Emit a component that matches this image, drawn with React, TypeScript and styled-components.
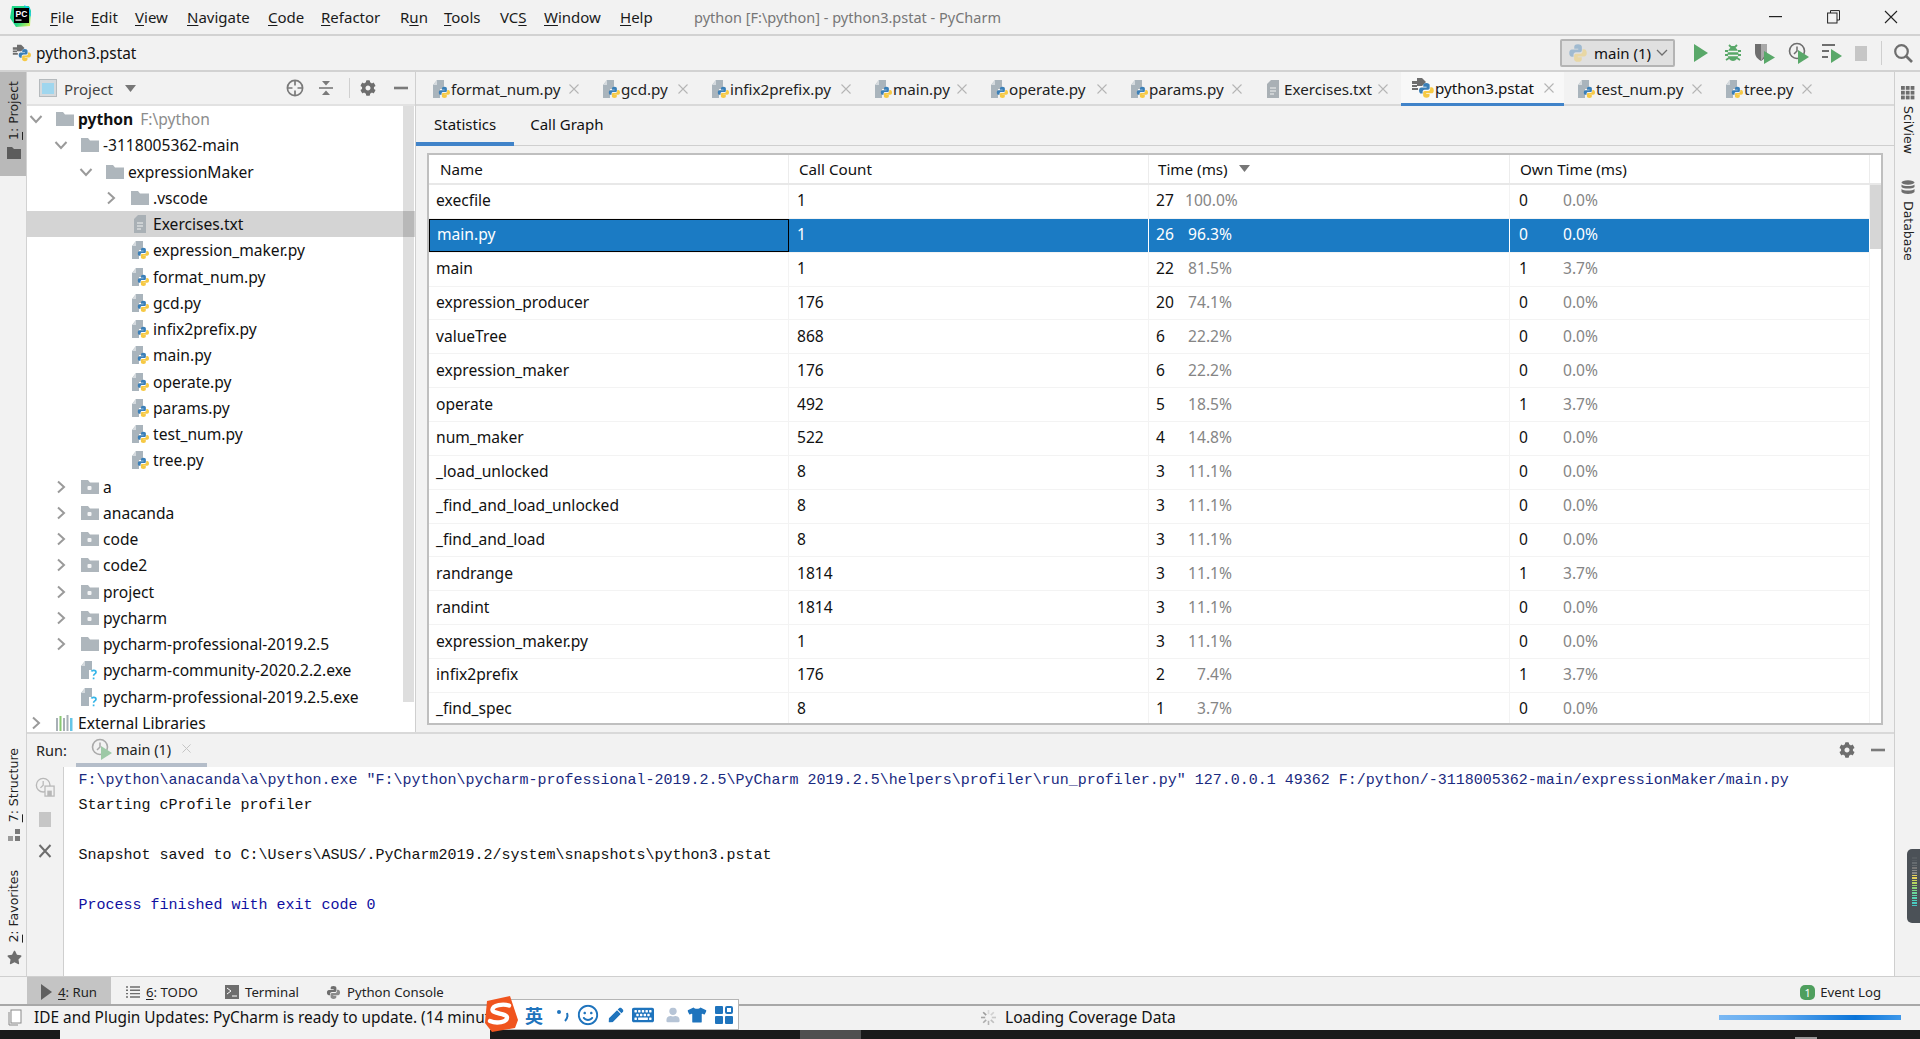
import React from "react";
import styled, { createGlobalStyle } from "styled-components";
import { FaCog, FaStar, FaTshirt, FaKeyboard, FaRegSmile, FaPen, FaUser } from "react-icons/fa";

const Global = createGlobalStyle`
  html, body { margin: 0; padding: 0; background: #f2f2f2; }
  * { box-sizing: border-box; }
  u { text-underline-offset: 2px; text-decoration-thickness: 1px; }
`;

const UI = `"Noto Sans", "Open Sans", sans-serif`;

const Page = styled.div`
  position: relative; width: 1920px; height: 1039px; overflow: hidden;
  display: flex; flex-direction: column; background: #f2f2f2;
  font-family: ${UI}; font-size: 15px; color: #111;
`;
const TitleBar = styled.div`
  height: 36px; flex: none; display: flex; align-items: center;
  border-bottom: 2px solid #d2d2d2; padding-left: 10px;
`;
const LogoBox = styled.div`width: 22px; height: 24px; flex: none; margin-top: -2px; display:flex; align-items:center;`;
const Menu = styled.div`display: flex; margin-left: 18px;`;
const MenuItem = styled.span<{ $w: number }>`width: ${p => p.$w}px; font-size: 15px; white-space: nowrap; color:#1a1a1a;`;
const WinTitle = styled.span`margin-left: 0; color: #777; font-size: 14.5px; white-space: nowrap;`;
const WinControls = styled.div`margin-left: auto; display: flex; align-items: center;`;
const WinBtn = styled.div`width: 58px; height: 34px; display: flex; align-items: center; justify-content: center;`;

const NavBar = styled.div`
  height: 36px; flex: none; display: flex; align-items: center; padding: 0 7px 0 12px;
  border-bottom: 2px solid #d2d2d2;
`;
const NavCrumb = styled.span`margin-left: 4px; font-size: 15.4px;`;
const NavTools = styled.div`margin-left: auto; display: flex; align-items: center; gap: 11.5px;`;
const RunConfig = styled.div`
  width: 115px; height: 28px; margin-right: 4.5px; display: flex; align-items: center; padding-left: 6px;
  background: #e0e0e0; border: 2px solid #b4b4b4; border-radius: 2px; font-size: 15px;
`;
const RunConfigName = styled.span`margin-left: 6px; white-space: nowrap;`;
const RunConfigCaret = styled.span`margin-left: auto; margin-right: 5px; display: flex;`;
const ToolSep = styled.div`width: 1px; height: 24px; background: #cfcfcf; margin: 0 0 0 2.5px;`;

const Middle = styled.div`flex: 1; min-height: 0; display: flex;`;
const LeftStripe = styled.div`
  width: 27px; flex: none; display: flex; flex-direction: column; align-items: stretch;
  border-right: 1px solid #d2d2d2;
`;
const StripeTab = styled.div<{ $active?: boolean; $mt?: string }>`
  display: flex; flex-direction: column; align-items: center; gap: 7px;
  padding: 7px 0 7px 2px; margin-top: ${p => p.$mt || "0"};
  background: ${p => (p.$active ? "#b9b9b9" : "transparent")};
`;
const StripeTabTop = styled(StripeTab)`padding-top: 9px; height: 104px;`;
const VerticalLabel = styled.span`
  writing-mode: vertical-rl; transform: rotate(180deg); white-space: nowrap;
  font-family: "DejaVu Sans", sans-serif; font-size: 12.5px; line-height: 14px; color: #222;
`;
const RightLabel = styled.span`
  writing-mode: vertical-rl; white-space: nowrap;
  font-family: "DejaVu Sans", sans-serif; font-size: 12.5px; line-height: 14px; color: #222;
`;
const RightStripe = styled.div`
  width: 26px; flex: none; display: flex; flex-direction: column; align-items: center;
  border-left: 1px solid #cfcfcf; padding-top: 14px;
`;
const RightTab = styled.div<{ $mb?: number }>`
  display: flex; flex-direction: column; align-items: center; gap: 6px; margin-bottom: ${p => p.$mb || 0}px;
`;
const Center = styled.div`flex: 1; min-width: 0; display: flex; flex-direction: column;`;
const TopSplit = styled.div`height: 662px; flex: none; display: flex; border-bottom: 2px solid #d9d9d9;`;

const ProjectPanel = styled.div`width: 389px; flex: none; display: flex; flex-direction: column; background: #fff; border-right: 1px solid #cfcfcf;`;
const PanelHead = styled.div`
  height: 34px; flex: none; display: flex; align-items: center; background: #f2f2f2;
  padding-left: 12px; border-bottom: 2px solid #e2e2e2;
`;
const PanelTitle = styled.span`margin-left: 7px; margin-top: 1px; color: #444; font-size: 15px;`;
const Caret = styled.span`margin-left: 12px; display: flex;`;
const PanelTools = styled.div`margin-left: auto; display: flex; align-items: center; gap: 14px; padding-right: 7px;`;
const PanelSep = styled.div`width: 1px; height: 20px; background: #d0d0d0; margin: 0 -4px 0 1px;`;
const MinusSlot = styled.span`display: flex; margin-left: 4px;`;
const TreeArea = styled.div`position: relative; flex: 1; min-height: 0;`;
const TreeThumb = styled.div`
  position: absolute; right: 1px; top: 0; width: 11px; height: 596px; background: rgba(0, 0, 0, 0.13);
`;
const TreeRow = styled.div<{ $depth: number; $sel?: boolean }>`
  height: 26.25px; display: flex; align-items: center; padding-left: ${p => 2 + p.$depth * 25}px;
  background: ${p => (p.$sel ? "#d4d4d4" : "transparent")}; white-space: nowrap; font-size: 15.6px; line-height: 20px;
`;
const Chev = styled.span`width: 14px; height: 14px; flex: none; display: flex; align-items: center; justify-content: center;`;
const TreeIcon = styled.span`width: 20px; height: 20px; flex: none; margin: 0 3px 0 12px; display: flex; align-items: center; justify-content: center;`;
const TreeRoot = styled.b`font-weight: 700; color:#111;`;
const TreeHint = styled.span`color: #8c8c8c; margin-left: 7px;`;

const Editor = styled.div`flex: 1; min-width: 0; display: flex; flex-direction: column;`;
const TabBar = styled.div`height: 34px; flex: none; display: flex; padding-left: 6px; border-bottom: 2px solid #d9d9d9;`;
const FileTab = styled.div<{ $w: number; $active?: boolean; $gap?: number }>`
  width: ${p => p.$w}px; height: ${p => (p.$active ? "34px" : "32px")}; flex: none; display: flex; align-items: center;
  padding: ${p => (p.$active ? "0 10px 0 10px" : "2px 13px 0 10px")}; white-space: nowrap; font-size: 15.2px; color: #222;
  margin-right: ${p => p.$gap || 0}px;
  ${p => (p.$active ? "background:#f8f8f8; border-bottom: 3px solid #4083c9; color:#111;" : "")}
`;
const TabIconGap = styled.span`display: flex; margin-right: 3px;`;
const TabClose = styled.span`margin-left: auto; display: flex;`;
const SubTabs = styled.div`height: 40px; flex: none; display: flex; border-bottom: 1px solid #cfcfcf;`;
const SubTab = styled.div<{ $active?: boolean }>`
  height: 40px; display: flex; align-items: center; font-size: 15px; color: #111;
  padding: 0 18px ${p => (p.$active ? 0 : 4)}px ${p => (p.$active ? 18 : 16)}px;
  ${p => (p.$active ? "border-bottom: 4px solid #4083c9;" : "")}
`;
const TableWrap = styled.div`
  flex: 1; min-height: 0; margin: 7px 11px 7px 11px; border: 2px solid #bfbfbf; background: #fff;
  display: flex; flex-direction: column; overflow: hidden;
`;
const HeadRow = styled.div`
  height: 30px; flex: none; display: grid; grid-template-columns: 360px 360px 361px 360px;
  border-bottom: 2px solid #e8e8e8;
`;
const HeadCell = styled.div<{ $pl: number }>`
  padding: 0 0 1px ${p => p.$pl}px; display: flex; align-items: center; gap: 11px; font-size: 15.2px; color: #111;
  border-right: 1px solid #ececec;
`;
const TableBody = styled.div`flex: 1; min-height: 0; display: flex;`;
const Rows = styled.div`width: 1441px; flex: none;`;
const TableScroll = styled.div`flex: 1; background: #fff;`;
const TableThumb = styled.div`height: 64px; background: #d6d6d6;`;
const Row = styled.div<{ $sel?: boolean }>`
  height: 33.87px; display: grid; grid-template-columns: 360px 360px 361px 360px;
  border-bottom: 1px solid #f3f3f3;
  background: ${p => (p.$sel ? "#1b7bc4" : "#fff")}; color: ${p => (p.$sel ? "#fff" : "#111")};
`;
const Cell = styled.div<{ $sel?: boolean; $focus?: boolean; $pl?: number }>`
  padding: 0 0 2px ${p => p.$pl ?? 7}px; display: flex; align-items: center; font-size: 15.6px; white-space: nowrap;
  border-right: 1px solid ${p => (p.$sel ? "#fff" : "#f3f3f3")};
  ${p => (p.$focus ? "border: 1px solid #000;" : "")}
`;
const Num = styled.span<{ $w: number }>`width: ${p => p.$w}px;`;
const Pct = styled.span<{ $sel?: boolean }>`
  width: 47px; text-align: right; color: ${p => (p.$sel ? "#fff" : "#858585")};
`;

const RunPanel = styled.div`flex: 1; min-height: 0; display: flex; flex-direction: column;`;
const RunHead = styled.div`height: 33px; flex: none; display: flex; align-items: stretch; padding-left: 9px;`;
const RunLabel = styled.span`align-self: center; font-size: 14.5px; color: #222; width: 40px; margin-top: -2px;`;
const RunTab = styled.div`
  width: 131px; display: flex; align-items: center; padding: 0 0 0 15px; border-bottom: 4px solid #b4bdc9;
  font-size: 14.5px; color: #222;
`;
const RunTabName = styled.span`margin-left: 3px; white-space: nowrap;`;
const RunTabClose = styled.span`margin-left: 11px; display: flex;`;
const RunTools = styled.div`margin-left: auto; display: flex; align-items: center; gap: 16px; padding: 0 9px 2px 0;`;
const ConsoleArea = styled.div`flex: 1; min-height: 0; display: flex;`;
const Gutter = styled.div`
  width: 37px; flex: none; border-right: 1px solid #cfcfcf; display: flex; flex-direction: column; align-items: center;
  padding-top: 10px; gap: 12px;
`;
const GutterBtn = styled.div`width: 20px; height: 20px; display: flex; align-items: center; justify-content: center;`;
const Console = styled.pre`
  flex: 1; margin: 0; background: #fff; padding: 1px 0 0 14.5px; overflow: hidden;
  font-family: "Liberation Mono", "DejaVu Sans Mono", monospace; font-size: 15px; line-height: 25px;
`;
const ConsoleLine = styled.div<{ $c: string }>`height: 25px; color: ${p => p.$c};`;

const BottomTabs = styled.div`
  height: 28px; flex: none; display: flex; align-items: stretch; border-top: 1px solid #cfcfcf; padding-left: 27px;
  font-size: 13.2px; color: #222;
`;
const BottomTab = styled.div<{ $w: number; $active?: boolean; $pl: number }>`
  width: ${p => p.$w}px; display: flex; align-items: center; gap: 6px; padding: 3px 0 0 ${p => p.$pl}px;
  white-space: nowrap; background: ${p => (p.$active ? "#c4c4c4" : "transparent")};
`;
const EventLog = styled.div`margin-left: auto; margin-right: 39px; padding-top: 3px; display: flex; align-items: center; gap: 5px;`;
const Badge = styled.span`
  width: 15px; height: 15px; border-radius: 5px; background: #4f9f5e; color: #fff; font-size: 11px; line-height: 15px; text-align: center;
`;
const StatusBar = styled.div`
  height: 26px; flex: none; display: flex; align-items: center; border-top: 2px solid #a8a8a8; padding: 0 0 2px 8px;
  font-size: 15.6px; color: #111;
`;
const StatusMsg = styled.div`width: 480px; margin-left: 12px; white-space: nowrap; flex: none; font-size: 15.4px;`;
const StatusLoading = styled.div`margin-left: 466px; display: flex; align-items: center; gap: 8px; white-space: nowrap;`;
const Progress = styled.div`
  flex: none; margin-left: auto; margin-right: 19px; width: 182px; height: 5px;
  background: linear-gradient(90deg, #7ab8f3 0%, #5ba6ee 35%, #0a74d8 75%, #3f98ea 100%);
`;
const Taskbar = styled.div`height: 9px; flex: none; display: flex; background: #1a1a1a;`;
const TaskLight = styled.div`width: 430px; margin-left: 60px; background: #f2f2f2;`;
const TaskTile = styled.div`width: 61px; margin-left: 310px; background: #505050;`;
const TaskGlyph = styled.div`width: 22px; height: 2px; margin: 7px 0 0 934px; background: #cfcfcf; opacity: .7;`;

const Ime = styled.div`
  position: absolute; left: 500px; top: 999px; width: 239px; height: 31px; background: #fff;
  border: 1px solid #b5b5b5; display: flex; align-items: center; color: #1f74bd;
`;
const ImeLogo = styled.div`position: absolute; left: -18px; top: -4px; width: 35px; height: 36px;`;
const ImeSlot = styled.span<{ $x: number }>`
  position: absolute; left: ${p => p.$x}px; top: 50%; transform: translate(-50%, -50%); display: flex;
`;
const ImeChar = styled.span`font-family: "Noto Sans CJK SC", sans-serif; font-weight: 700; font-size: 18px; line-height: 20px;`;
const Meter = styled.div`
  position: absolute; right: 0; top: 849px; width: 13px; height: 74px; background: #4b5157;
  border-radius: 5px 0 0 5px; padding: 8px 3px 8px 5px; display: flex; flex-direction: column; gap: 1px;
`;
const MeterBar = styled.div<{ $c: string }>`height: 1.5px; width: 5px; background: ${p => p.$c};`;

/* ---------- icons ---------- */
const BLUE = "M8 1C5.6 1 5 2 5 3.1V4.6h3.2v.6H3.1C1.9 5.2 1 6.2 1 8s.9 3 2.1 3h1.3V9.3c0-1 .9-1.9 1.9-1.9h3.2c.9 0 1.6-.7 1.6-1.6V3.1C11.1 2 10 1 8 1z";
const PyLogo = ({ s = 14, o = 1 }: { s?: number; o?: number }) => (
  <svg width={s} height={s} viewBox="0 0 16 16" opacity={o}>
    <path d={BLUE} fill="#3a7fb8" />
    <path d={BLUE} fill="#f6c945" transform="rotate(180 8 8)" />
  </svg>
);
const PyFile = () => (
  <svg width="19" height="20" viewBox="0 0 19 20">
    <path d="M1 6l4-5h7v9H8v9H1z" fill="#a9b4bc" />
    <path d="M5 1v5H1z" fill="#d5dade" />
    <g transform="translate(6 7) scale(.8)">
      <path d={BLUE} fill="#3a7fb8" />
      <path d={BLUE} fill="#f6c945" transform="rotate(180 8 8)" />
    </g>
  </svg>
);
const TxtFile = () => (
  <svg width="16" height="20" viewBox="0 0 16 20">
    <path d="M2 5l4-4h8v18H2z" fill="#a9b0b5" />
    <path d="M5 9h6M5 12h6M5 15h4" stroke="#f2f2f2" strokeWidth="1.2" />
  </svg>
);
const QFile = () => (
  <svg width="20" height="20" viewBox="0 0 20 20">
    <path d="M1 6l4-5h7v9H9v9H1z" fill="#a9b4bc" />
    <path d="M5 1v5H1z" fill="#d5dade" />
    <path d="M11.5 11.5c.3-1.5 4.5-1.8 4.5.7 0 1.8-2.4 1.6-2.4 3.6M13.6 17.4v1.8" stroke="#35b5e8" strokeWidth="1.7" fill="none" />
  </svg>
);
const Pstat = ({ s = 24 }: { s?: number }) => (
  <svg width={s} height={s} viewBox="0 0 24 24">
    <path d="M1 5h5V2h5l4 4-4 4H6V8H1zM1 9h5v2H1zM1 12h6v2H1z" fill="#6e6e6e" />
    <g transform="translate(7 6) scale(1.05)">
      <path d={BLUE} fill="#3a7fb8" />
      <path d={BLUE} fill="#f6c945" transform="rotate(180 8 8)" />
    </g>
  </svg>
);
const Folder = ({ dot }: { dot?: boolean }) => (
  <svg width="18" height="16" viewBox="0 0 18 16">
    <path d="M0 1h7l2 2.5h9V15H0z" fill="#aeb6bc" />
    {dot && <rect x="6.5" y="7" width="4" height="4" rx="1" fill="#f4f5f6" />}
  </svg>
);
const ChevR = () => (<svg width="10" height="14" viewBox="0 0 10 14"><path d="M2 1.5L8 7l-6 5.5" fill="none" stroke="#9a9a9a" strokeWidth="2" /></svg>);
const ChevD = () => (<svg width="14" height="10" viewBox="0 0 14 10"><path d="M1.5 2L7 8l5.5-6" fill="none" stroke="#9a9a9a" strokeWidth="2" /></svg>);
const Libs = () => (
  <svg width="18" height="16" viewBox="0 0 18 16">
    <rect x="0" y="3" width="2" height="13" fill="#a8b0b6" /><rect x="3.5" y="1" width="2" height="15" fill="#62b543" opacity=".75" />
    <rect x="7" y="3" width="2" height="13" fill="#a8b0b6" /><rect x="10.5" y="0" width="2" height="16" fill="#a8b0b6" />
    <rect x="14" y="3" width="2.5" height="13" fill="#40b6e0" opacity=".8" />
  </svg>
);
const CloseX = ({ c = "#b5b5b5", s = 10 }: { c?: string; s?: number }) => (
  <svg width={s} height={s} viewBox="0 0 10 10"><path d="M.5.5l9 9M9.5.5l-9 9" stroke={c} strokeWidth="1.1" /></svg>
);
const Play = ({ x = 0, y = 0, w = 9, h = 11 }: { x?: number; y?: number; w?: number; h?: number }) => (
  <path d={`M${x} ${y}l${w} ${h / 2}-${w} ${h / 2}z`} fill="#59a869" />
);
const PlayIcon = () => (<svg width="20" height="20" viewBox="0 0 20 20"><path d="M3 1l14 9-14 9z" fill="#59a869" /></svg>);
const Bug = () => (
  <svg width="20" height="20" viewBox="0 0 20 20">
    <path d="M6 2l2 2h4l2-2M2 8h3M15 8h3M2 12h3M15 12h3M3 17l3-2M17 17l-3-2" stroke="#59a869" strokeWidth="1.8" fill="none" />
    <ellipse cx="10" cy="11" rx="5.5" ry="7" fill="#59a869" />
    <path d="M5 8.5h10M5 12.5h10" stroke="#f2f2f2" strokeWidth="1.3" />
  </svg>
);
const Shield = () => (
  <svg width="22" height="22" viewBox="0 0 22 22">
    <path d="M1 2h12v8c0 5-3 7-6 9-3-2-6-4-6-9z" fill="#6e6e6e" />
    <path d="M7 2h6v8l-6 9z" fill="#a8a8a8" />
    <Play x={10} y={9} w={11} h={13} />
  </svg>
);
const Clock = ({ o = 1 }: { o?: number }) => (
  <svg width="22" height="22" viewBox="0 0 22 22" opacity={o}>
    <circle cx="9" cy="9" r="7.5" fill="none" stroke="#6e6e6e" strokeWidth="1.6" />
    <path d="M9 4.5V9l-3 3" fill="none" stroke="#6e6e6e" strokeWidth="1.5" />
    <Play x={10} y={8} w={11} h={14} />
  </svg>
);
const ListRun = () => (
  <svg width="22" height="22" viewBox="0 0 22 22">
    <path d="M1 3h13M1 9h7M1 15h6" stroke="#6e6e6e" strokeWidth="2.2" />
    <Play x={10} y={7} w={11} h={14} />
  </svg>
);
const Stop = ({ s = 15 }: { s?: number }) => (<svg width={s} height={s + 3} viewBox={`0 0 ${s} ${s + 3}`}><rect width={s} height={s + 3} fill="#c6c6c6" /></svg>);
const Search = () => (
  <svg width="20" height="20" viewBox="0 0 20 20"><circle cx="8.5" cy="8.5" r="6.3" fill="none" stroke="#6e6e6e" strokeWidth="2.2" /><path d="M13 13l6 6" stroke="#6e6e6e" strokeWidth="2.6" /></svg>
);
const PcLogo = () => (
  <svg width="22" height="24" viewBox="0 0 22 24">
    <defs>
      <linearGradient id="pc" x1="0" y1="0" x2="1" y2="1">
        <stop offset="0" stopColor="#21d789" /><stop offset=".6" stopColor="#21d789" /><stop offset="1" stopColor="#fcf84a" />
      </linearGradient>
    </defs>
    <path d="M2 2h17l2 5-1 15-14 1-6-9z" fill="url(#pc)" />
    <path d="M14 1l6 3 1 9z" fill="#07c3f2" />
    <rect x="4" y="4" width="15" height="15" fill="#000" />
    <text x="5.5" y="12.5" fontSize="8.5" fontWeight="700" fill="#fff" fontFamily="Liberation Sans, sans-serif">PC</text>
    <rect x="5.5" y="15.5" width="6" height="1.2" fill="#fff" />
  </svg>
);
const Target = () => (
  <svg width="18" height="18" viewBox="0 0 18 18"><circle cx="9" cy="9" r="7.6" fill="none" stroke="#7a7a7a" strokeWidth="1.7" /><path d="M9 1.5v5M9 11.5v5M1.5 9h5M11.5 9h5" stroke="#7a7a7a" strokeWidth="1.7" /></svg>
);
const CollapseAll = () => (
  <svg width="16" height="16" viewBox="0 0 16 16"><path d="M1 8h14" stroke="#7a7a7a" strokeWidth="1.6" /><path d="M4 1h8L8 5.5zM4 15h8l-4-4.5z" fill="#7a7a7a" /></svg>
);
const Minus = () => (<svg width="14" height="4" viewBox="0 0 14 4"><rect width="14" height="2.6" y=".7" fill="#7a7a7a" /></svg>);
const PanelGlyph = () => (
  <svg width="18" height="18" viewBox="0 0 18 18"><rect x=".5" y=".5" width="17" height="17" fill="#d5d9dc" stroke="#b5babd" /><rect x="3" y="4" width="12" height="11" fill="#9fd6ee" /></svg>
);
const DownTri = ({ c = "#777" }: { c?: string }) => (<svg width="11" height="7" viewBox="0 0 11 7"><path d="M0 0h11L5.5 7z" fill={c} /></svg>);
const StripeFolder = () => (<svg width="14" height="12" viewBox="0 0 14 12"><path d="M0 0h5l2 2h7v10H0z" fill="#5c5c5c" /></svg>);
const StructureGlyph = () => (<svg width="13" height="13" viewBox="0 0 13 13"><rect x="7" y="0" width="5" height="5" fill="#7a7a7a" /><rect x="7" y="7" width="5" height="5" fill="#7a7a7a" /><rect x="0" y="7" width="5" height="5" fill="#9a9a9a" /></svg>);
const SciGlyph = () => (
  <svg width="14" height="14" viewBox="0 0 14 14">{[0, 4.8, 9.6].flatMap(y => [0, 4.8, 9.6].map(x => <rect key={`${x}-${y}`} x={x} y={y} width="3.8" height="3.8" fill="#6e6e6e" />))}</svg>
);
const DbGlyph = () => (
  <svg width="14" height="15" viewBox="0 0 14 15"><ellipse cx="7" cy="2.5" rx="6.5" ry="2.2" fill="#6e6e6e" /><path d="M.5 4.5c2 2 11 2 13 0v2.5c-2 2-11 2-13 0zM.5 9c2 2 11 2 13 0v3c-2 2.5-11 2.5-13 0z" fill="#6e6e6e" /></svg>
);
const RerunDisk = () => (
  <svg width="22" height="22" viewBox="0 0 22 22" opacity=".55">
    <circle cx="9" cy="9" r="7.5" fill="none" stroke="#8a8a8a" strokeWidth="1.5" /><path d="M9 4.5V9l-3 3" fill="none" stroke="#8a8a8a" strokeWidth="1.4" />
    <rect x="11" y="10" width="10" height="11" fill="#f2f2f2" stroke="#8a8a8a" strokeWidth="1.4" /><rect x="13.5" y="15" width="5" height="6" fill="#8a8a8a" />
  </svg>
);
const BigX = () => (<svg width="14" height="14" viewBox="0 0 14 14"><path d="M1.5 1l11 12M12.5 1l-11 12" stroke="#6e6e6e" strokeWidth="2" /></svg>);
const TodoGlyph = () => (<svg width="14" height="12" viewBox="0 0 14 12"><path d="M0 1h2M4 1h10M0 4.3h2M4 4.3h10M0 7.6h2M4 7.6h10M0 11h2M4 11h10" stroke="#6e6e6e" strokeWidth="1.4" /></svg>);
const TermGlyph = () => (<svg width="14" height="14" viewBox="0 0 14 14"><rect width="14" height="14" fill="#6e6e6e" /><path d="M2 3l4 3-4 3M7 11h5" stroke="#fff" strokeWidth="1" fill="none" /></svg>);
const ConsoleGlyph = () => (
  <svg width="15" height="17" viewBox="0 0 16 16"><path d={BLUE} fill="#6e6e6e" /><path d={BLUE} fill="#8a8a8a" transform="rotate(180 8 8)" /></svg>
);
const RunTri = () => (<svg width="11" height="16" viewBox="0 0 11 16"><path d="M0 0l11 8-11 8z" fill="#5f5f5f" /></svg>);
const Note = () => (<svg width="14" height="17" viewBox="0 0 14 17"><rect x="3" y="1" width="10" height="13" fill="#fff" stroke="#8a8a8a" /><path d="M1 3v13h9" fill="none" stroke="#8a8a8a" /></svg>);
const Spinner = () => (
  <svg width="17" height="17" viewBox="0 0 17 17">
    {Array.from({ length: 8 }).map((_, i) => (
      <path key={i} d="M8.5 1v4.2" stroke="#8f8f8f" strokeOpacity={0.25 + i * 0.09} strokeWidth="1.6" transform={`rotate(${i * 45} 8.5 8.5)`} />
    ))}
  </svg>
);
const Sogou = () => (
  <svg width="35" height="36" viewBox="0 0 35 36">
    <path d="M4 5L27 0l8 24-3 8-23 4L2 27z" fill="#f0541e" />
    <path d="M26 9.5C20 7.5 10 9 9.5 13.5S24 17 24 21.5 14 28 7 25" fill="none" stroke="#fff" strokeWidth="4.4" strokeLinecap="round" />
  </svg>
);
const Grid4 = () => (
  <svg width="18" height="18" viewBox="0 0 18 18">
    <rect width="8" height="8" rx="1" fill="#1f74bd" /><rect x="11" y="1" width="6" height="6" rx="1" fill="none" stroke="#1f74bd" strokeWidth="2" />
    <rect y="10" width="8" height="8" rx="1" fill="#1f74bd" /><rect x="10" y="10" width="8" height="8" rx="1" fill="#1f74bd" />
  </svg>
);

/* ---------- data ---------- */
const menus: [React.ReactNode, number][] = [
  [<><u>F</u>ile</>, 41], [<><u>E</u>dit</>, 44], [<><u>V</u>iew</>, 52], [<><u>N</u>avigate</>, 81], [<><u>C</u>ode</>, 53],
  [<><u>R</u>efactor</>, 79], [<>R<u>u</u>n</>, 44], [<><u>T</u>ools</>, 56], [<>VC<u>S</u></>, 44], [<><u>W</u>indow</>, 76], [<><u>H</u>elp</>, 74],
];
const tabs: [string, number][] = [
  ["format_num.py", 170], ["gcd.py", 109], ["infix2prefix.py", 163], ["main.py", 116], ["operate.py", 140], ["params.py", 135],
];
type Node = { d: number; t: React.ReactNode; ch?: "r" | "d"; i: React.ReactNode; sel?: boolean };
const py = <PyFile />;
const tree: Node[] = [
  { d: 0, ch: "d", i: <Folder />, t: <><TreeRoot>python</TreeRoot><TreeHint>F:\python</TreeHint></> },
  { d: 1, ch: "d", i: <Folder />, t: "-3118005362-main" },
  { d: 2, ch: "d", i: <Folder />, t: "expressionMaker" },
  { d: 3, ch: "r", i: <Folder />, t: ".vscode" },
  { d: 3, i: <TxtFile />, t: "Exercises.txt", sel: true },
  ...["expression_maker.py", "format_num.py", "gcd.py", "infix2prefix.py", "main.py", "operate.py", "params.py", "test_num.py", "tree.py"].map(t => ({ d: 3, i: py, t })),
  ...["a", "anacanda", "code", "code2", "project", "pycharm"].map(t => ({ d: 1, ch: "r" as const, i: <Folder dot />, t })),
  { d: 1, ch: "r", i: <Folder />, t: "pycharm-professional-2019.2.5" },
  { d: 1, i: <QFile />, t: "pycharm-community-2020.2.2.exe" },
  { d: 1, i: <QFile />, t: "pycharm-professional-2019.2.5.exe" },
  { d: 0, ch: "r", i: <Libs />, t: "External Libraries" },
];
const rows: [string, string, string, string, string, string][] = [
  ["execfile", "1", "27", "100.0%", "0", "0.0%"],
  ["main.py", "1", "26", "96.3%", "0", "0.0%"],
  ["main", "1", "22", "81.5%", "1", "3.7%"],
  ["expression_producer", "176", "20", "74.1%", "0", "0.0%"],
  ["valueTree", "868", "6", "22.2%", "0", "0.0%"],
  ["expression_maker", "176", "6", "22.2%", "0", "0.0%"],
  ["operate", "492", "5", "18.5%", "1", "3.7%"],
  ["num_maker", "522", "4", "14.8%", "0", "0.0%"],
  ["_load_unlocked", "8", "3", "11.1%", "0", "0.0%"],
  ["_find_and_load_unlocked", "8", "3", "11.1%", "0", "0.0%"],
  ["_find_and_load", "8", "3", "11.1%", "0", "0.0%"],
  ["randrange", "1814", "3", "11.1%", "1", "3.7%"],
  ["randint", "1814", "3", "11.1%", "0", "0.0%"],
  ["expression_maker.py", "1", "3", "11.1%", "0", "0.0%"],
  ["infix2prefix", "176", "2", "7.4%", "1", "3.7%"],
  ["_find_spec", "8", "1", "3.7%", "0", "0.0%"],
];
const consoleLines: [string, string][] = [
  [`F:\\python\\anacanda\\a\\python.exe "F:\\python\\pycharm-professional-2019.2.5\\PyCharm 2019.2.5\\helpers\\profiler\\run_profiler.py" 127.0.0.1 49362 F:/python/-3118005362-main/expressionMaker/main.py`, "#1a2a80"],
  ["Starting cProfile profiler", "#111"],
  ["\u00a0", "#111"],
  ["Snapshot saved to C:\\Users\\ASUS/.PyCharm2019.2/system\\snapshots\\python3.pstat", "#111"],
  ["\u00a0", "#111"],
  ["Process finished with exit code 0", "#1010a0"],
];
const meterColors = ["#555b60","#555b60","#666c70","#666c70","#777","#888","#888","#e6d15a","#e6d15a","#c9d45a","#b5d660","#9bd66a","#8ad67a","#7ad68a","#6ad69a","#5fd6aa","#55d6b5","#4fd0bb","#4acbc0","#45c6c5"];

export default function App() {
  return (
    <Page>
      <Global />
      <TitleBar>
        <LogoBox><PcLogo /></LogoBox>
        <Menu>{menus.map(([m, w], i) => <MenuItem key={i} $w={w}>{m}</MenuItem>)}</Menu>
        <WinTitle>python [F:\python] - python3.pstat - PyCharm</WinTitle>
        <WinControls>
          <WinBtn><svg width="13" height="2"><rect width="13" height="1.2" fill="#222" /></svg></WinBtn>
          <WinBtn><svg width="13" height="14" viewBox="0 0 13 14"><path d="M3.5 3V.6h9v9.4H10" fill="none" stroke="#222" /><rect x=".6" y="3" width="9.4" height="10" fill="none" stroke="#222" /></svg></WinBtn>
          <WinBtn><svg width="14" height="14" viewBox="0 0 14 14"><path d="M1 1l12 12M13 1L1 13" stroke="#222" strokeWidth="1.1" /></svg></WinBtn>
        </WinControls>
      </TitleBar>
      <NavBar>
        <Pstat s={20} />
        <NavCrumb>python3.pstat</NavCrumb>
        <NavTools>
          <RunConfig>
            <PyLogo s={20} o={0.38} />
            <RunConfigName>main (1)</RunConfigName>
            <RunConfigCaret><svg width="12" height="8" viewBox="0 0 12 8"><path d="M1 1l5 5 5-5" fill="none" stroke="#6e6e6e" strokeWidth="1.3" /></svg></RunConfigCaret>
          </RunConfig>
          <PlayIcon /><Bug /><Shield /><Clock /><ListRun /><Stop s={12} />
          <ToolSep />
          <Search />
        </NavTools>
      </NavBar>
      <Middle>
        <LeftStripe>
          <StripeTabTop $active>
            <VerticalLabel><u>1</u>: Project</VerticalLabel>
            <StripeFolder />
          </StripeTabTop>
          <StripeTab $mt="565px"><VerticalLabel><u>7</u>: Structure</VerticalLabel><StructureGlyph /></StripeTab>
          <StripeTab $mt="14px"><VerticalLabel><u>2</u>: Favorites</VerticalLabel><FaStar size={15} color="#6e6e6e" /></StripeTab>
        </LeftStripe>
        <Center>
          <TopSplit>
            <ProjectPanel>
              <PanelHead>
                <PanelGlyph />
                <PanelTitle>Project</PanelTitle>
                <Caret><DownTri /></Caret>
                <PanelTools>
                  <Target /><CollapseAll /><PanelSep />
                  <FaCog size={16} color="#6e6e6e" /><MinusSlot><Minus /></MinusSlot>
                </PanelTools>
              </PanelHead>
              <TreeArea>
                {tree.map((n, i) => (
                  <TreeRow key={i} $depth={n.d} $sel={n.sel}>
                    <Chev>{n.ch === "d" ? <ChevD /> : n.ch === "r" ? <ChevR /> : null}</Chev>
                    <TreeIcon>{n.i}</TreeIcon>
                    <span>{n.t}</span>
                  </TreeRow>
                ))}
                <TreeThumb />
              </TreeArea>
            </ProjectPanel>
            <Editor>
              <TabBar>
                {tabs.map(([t, w]) => (
                  <FileTab key={t} $w={w}><PyFile /><span>{t}</span><TabClose><CloseX /></TabClose></FileTab>
                ))}
                <FileTab $w={146}><TabIconGap><TxtFile /></TabIconGap><span>Exercises.txt</span><TabClose><CloseX /></TabClose></FileTab>
                <FileTab $w={163} $gap={3} $active><Pstat /><span>python3.pstat</span><TabClose><CloseX /></TabClose></FileTab>
                <FileTab $w={148}><PyFile /><span>test_num.py</span><TabClose><CloseX /></TabClose></FileTab>
                <FileTab $w={110}><PyFile /><span>tree.py</span><TabClose><CloseX /></TabClose></FileTab>
              </TabBar>
              <SubTabs>
                <SubTab $active>Statistics</SubTab>
                <SubTab>Call Graph</SubTab>
              </SubTabs>
              <TableWrap>
                <HeadRow>
                  <HeadCell $pl={11}>Name</HeadCell>
                  <HeadCell $pl={10}>Call Count</HeadCell>
                  <HeadCell $pl={9}>Time (ms)<DownTri /></HeadCell>
                  <HeadCell $pl={10}>Own Time (ms)</HeadCell>
                </HeadRow>
                <TableBody>
                  <Rows>
                    {rows.map((r, i) => {
                      const sel = i === 1;
                      return (
                        <Row key={i} $sel={sel}>
                          <Cell $sel={sel} $focus={sel}>{r[0]}</Cell>
                          <Cell $sel={sel} $pl={8}>{r[1]}</Cell>
                          <Cell $sel={sel} $pl={7}><Num $w={29}>{r[2]}</Num><Pct $sel={sel}>{r[3]}</Pct></Cell>
                          <Cell $sel={sel} $pl={9}><Num $w={32}>{r[4]}</Num><Pct $sel={sel}>{r[5]}</Pct></Cell>
                        </Row>
                      );
                    })}
                  </Rows>
                  <TableScroll><TableThumb /></TableScroll>
                </TableBody>
              </TableWrap>
            </Editor>
          </TopSplit>
          <RunPanel>
            <RunHead>
              <RunLabel>Run:</RunLabel>
              <RunTab>
                <Clock o={0.55} />
                <RunTabName>main (1)</RunTabName>
                <RunTabClose><CloseX c="#c4c4c4" s={9} /></RunTabClose>
              </RunTab>
              <RunTools><FaCog size={16} color="#6e6e6e" /><Minus /></RunTools>
            </RunHead>
            <ConsoleArea>
              <Gutter>
                <GutterBtn><RerunDisk /></GutterBtn>
                <GutterBtn><Stop s={12} /></GutterBtn>
                <GutterBtn><BigX /></GutterBtn>
              </Gutter>
              <Console>
                {consoleLines.map(([t, c], i) => <ConsoleLine key={i} $c={c}>{t}</ConsoleLine>)}
              </Console>
            </ConsoleArea>
          </RunPanel>
        </Center>
        <RightStripe>
          <RightTab $mb={26}><SciGlyph /><RightLabel>SciView</RightLabel></RightTab>
          <RightTab><DbGlyph /><RightLabel>Database</RightLabel></RightTab>
        </RightStripe>
      </Middle>
      <BottomTabs>
        <BottomTab $w={84} $active $pl={14}><RunTri /><span><u>4</u>: Run</span></BottomTab>
        <BottomTab $w={103} $pl={15}><TodoGlyph /><span><u>6</u>: TODO</span></BottomTab>
        <BottomTab $w={102} $pl={11}><TermGlyph /><span>Terminal</span></BottomTab>
        <BottomTab $w={150} $pl={10}><ConsoleGlyph /><span>Python Console</span></BottomTab>
        <EventLog><Badge>1</Badge><span>Event Log</span></EventLog>
      </BottomTabs>
      <StatusBar>
        <Note />
        <StatusMsg>IDE and Plugin Updates: PyCharm is ready to update. (14 minut</StatusMsg>
        <StatusLoading><Spinner /><span>Loading Coverage Data</span></StatusLoading>
        <Progress />
      </StatusBar>
      <Taskbar>
        <TaskLight />
        <TaskTile />
        <TaskGlyph />
      </Taskbar>
      <Ime>
        <ImeLogo><Sogou /></ImeLogo>
        <ImeSlot $x={33}><ImeChar>英</ImeChar></ImeSlot>
        <ImeSlot $x={62}><svg width="14" height="14" viewBox="0 0 14 14"><circle cx="3" cy="4" r="2" fill="#1f74bd" /><path d="M11 5c1 3 0 6-2 8" fill="none" stroke="#1f74bd" strokeWidth="2" /></svg></ImeSlot>
        <ImeSlot $x={87}><FaRegSmile size={21} /></ImeSlot>
        <ImeSlot $x={115}><FaPen size={15} /></ImeSlot>
        <ImeSlot $x={142}><FaKeyboard size={22} /></ImeSlot>
        <ImeSlot $x={172}><FaUser size={15} color="#b6c4d6" /></ImeSlot>
        <ImeSlot $x={196}><FaTshirt size={19} /></ImeSlot>
        <ImeSlot $x={223}><Grid4 /></ImeSlot>
      </Ime>
      <Meter>{meterColors.map((c, i) => <MeterBar key={i} $c={c} />)}</Meter>
    </Page>
  );
}
